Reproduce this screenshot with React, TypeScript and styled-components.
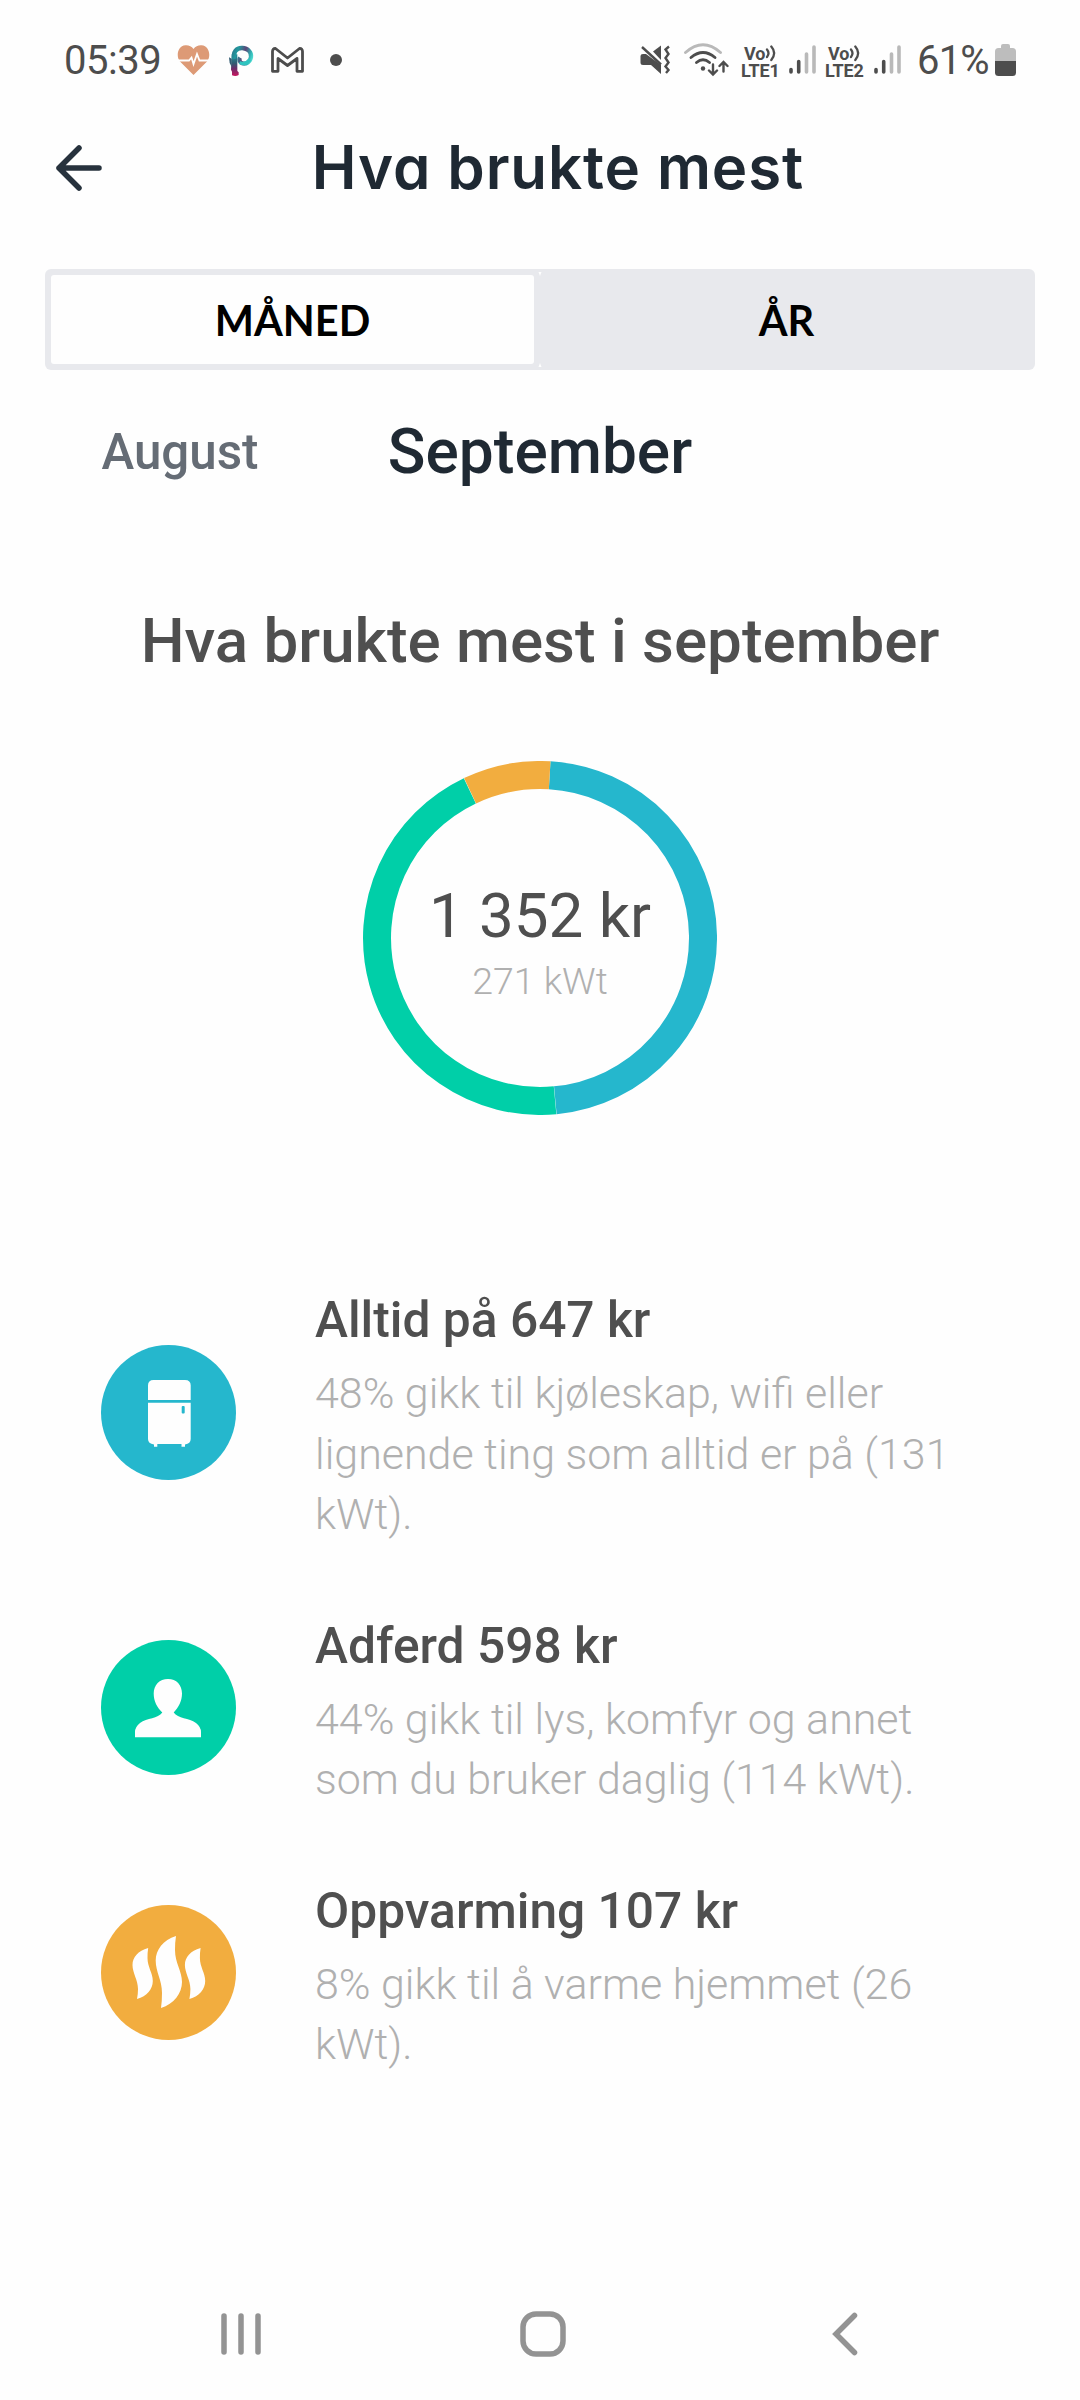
import React from "react";
import styled, { createGlobalStyle } from "styled-components";

const GlobalStyle = createGlobalStyle`
  * { box-sizing: border-box; }
  body { margin: 0; background: #fefefe; }
  svg { display: block; flex: none; }
`;

const ink = "#4d4d4d";
const faded = "#b9b9b9";

const Screen = styled.div`
  width: 1080px;
  height: 2400px;
  display: flex;
  flex-direction: column;
  background: #fefefe;
  font-family: Roboto, "Noto Sans", sans-serif;
  overflow: hidden;
`;

const StatusBar = styled.div`
  height: 120px;
  display: flex;
  align-items: center;
  justify-content: space-between;
  padding: 0 64px;
  color: ${ink};
  font-size: 40px;
  line-height: 48px;
`;

const StatusGroup = styled.div`
  display: flex;
  align-items: center;
`;

const Gap = styled.span<{ $w: number }>`
  width: ${(p) => p.$w}px;
  flex: none;
`;

const Clock = styled.span`
  width: 113px;
  padding-top: 1px;
  white-space: nowrap;
  letter-spacing: -0.5px;
`;

const Percent = styled.span`
  width: 76px;
  padding-top: 1px;
  white-space: nowrap;
  letter-spacing: -0.8px;
`;

const Volte = styled.div`
  width: 41px;
  display: flex;
  flex-direction: column;
  font-size: 18px;
  line-height: 17px;
  font-weight: 700;
  letter-spacing: -0.2px;
  padding-top: 4px;
  white-space: nowrap;
`;

const VolteTop = styled.div`
  display: flex;
  padding-left: 3px;
`;

const Header = styled.header`
  height: 149px;
  padding: 0 0 53px 55px;
  display: grid;
  grid-template-columns: 48px 1fr 103px;
  align-items: center;
`;

const Title = styled.h1`
  margin: 0 0 2px 36px;
  font-family: Inter, sans-serif;
  font-size: 60px;
  line-height: 72px;
  font-weight: 600;
  font-feature-settings: "cv11", "ss03";
  letter-spacing: 0.9px;
  text-align: center;
  white-space: nowrap;
  color: #1f2933;
`;

const Tabs = styled.div`
  position: relative;
  height: 101px;
  margin: 0 45px;
  display: grid;
  grid-template-columns: 483px 493px;
  column-gap: 6px;
  padding: 6px 0 6px 6px;
  border-radius: 6px;
  background: #e8e9ed;
`;

const TabSeam = styled.svg`
  position: absolute;
  left: 493px;
  top: 3px;
`;

const Tab = styled.button<{ $active?: boolean }>`
  border: 0;
  padding: 0;
  border-radius: 3px;
  background: ${(p) => (p.$active ? "#fefefe" : "transparent")};
  color: #000;
  font: 700 41.5px/60px Lato, sans-serif;
`;

const Months = styled.div`
  height: 164px;
  display: grid;
  grid-template-columns: 360px 360px 360px;
  align-items: center;
  justify-items: center;
`;

const Month = styled.span<{ $current?: boolean }>`
  font-weight: 500;
  font-size: ${(p) => (p.$current ? 62.2 : 49.3)}px;
  line-height: 72px;
  color: ${(p) => (p.$current ? "#1f2933" : "#656c75")};
`;

const SectionTitle = styled.h2`
  margin: 71px 0 0;
  font-size: 61.9px;
  line-height: 72px;
  font-weight: 500;
  text-align: center;
  color: #4f4f4f;
`;

const Chart = styled.div`
  display: grid;
  place-items: center;
  margin: 84px auto 0;
  width: 354px;
  height: 354px;
  & > * { grid-area: 1 / 1; }
`;

const Total = styled.div`
  display: flex;
  flex-direction: column;
  align-items: center;
  padding-top: 6px;
`;

const Amount = styled.span`
  font-size: 61.9px;
  line-height: 80px;
  color: #4f4f4f;
`;

const Energy = styled.span`
  font-size: 37.5px;
  line-height: 50px;
  font-weight: 300;
  color: #b0b0b0;
`;

const List = styled.ul`
  list-style: none;
  margin: 165px 0 0;
  padding: 0 101px;
  display: flex;
  flex-direction: column;
  gap: 61px;
`;

const Item = styled.li`
  display: grid;
  grid-template-columns: 135px 660px;
  column-gap: 79px;
  align-items: center;
`;

const Badge = styled.div<{ $color: string }>`
  width: 135px;
  height: 135px;
  border-radius: 50%;
  background: ${(p) => p.$color};
`;

const ItemTitle = styled.h3`
  margin: 0 0 3px;
  font-size: 49.7px;
  line-height: 80px;
  font-weight: 500;
  color: #4f4f4f;
`;

const ItemText = styled.p`
  margin: 0;
  font-size: 42.95px;
  line-height: 60.5px;
  font-weight: 300;
  color: #b0b0b0;
`;

const NavBar = styled.nav`
  margin-top: auto;
  height: 132px;
  display: grid;
  grid-template-columns: 299px 312px 26px;
  padding-left: 221px;
  align-items: center;
`;

const BLUE = "#25b7cd";
const GREEN = "#00cfa8";
const ORANGE = "#f2ad3f";

const arc = (from: number, to: number) => {
  const r = 163;
  const pt = (d: number) => {
    const a = (d * Math.PI) / 180;
    return `${(177 + r * Math.sin(a)).toFixed(2)} ${(177 - r * Math.cos(a)).toFixed(2)}`;
  };
  return `M${pt(from)}A${r} ${r} 0 0 1 ${pt(to)}`;
};

const Donut = () => (
  <svg width="354" height="354" viewBox="0 0 354 354" fill="none" strokeWidth="28">
    <path d={arc(3.4, 174.6)} stroke={BLUE} />
    <path d={arc(174.7, 334.5)} stroke={GREEN} />
    <path d={arc(334.6, 363.4)} stroke={ORANGE} />
  </svg>
);

const Fridge = () => (
  <svg width="135" height="135" viewBox="0 0 135 135" fill="#fefefe">
    <path d="M47 55V40.500Q47 35 52.500 35H84Q89.700 35 89.700 40.500V55Z" />
    <path d="M47 57.700H89.700V94Q89.700 98.500 84 99.500V101.800H80.500V99H56.300V101.800H53V99.500Q47 98.500 47 94Z" />
    <rect x="80.700" y="61" width="3" height="7.500" rx="1" fill={BLUE} />
  </svg>
);

const Person = () => (
  <svg width="135" height="135" viewBox="0 0 135 135" fill="#fefefe">
    <path d="M67 39C75.500 39 81 45 81 53.500C81 61 77.500 67.500 72.700 72.500C77 79 88 77.500 95 83Q100 87 100 92V97.300H34V92Q34 87 39 83C46 77.500 57 79 61.300 72.500C56 67.500 52.700 61 52.700 53.500C52.700 45 58.500 39 67 39Z" />
  </svg>
);

const sideFlame =
  "M47.200 43C37 46 31.500 52 31.500 60C31.500 68 37 75 37 84Q37 89 36 94C46 91.500 51.800 84 51.800 76C51.800 68 46.500 62 46.500 53Q46.500 47 47.200 43Z";

const Heat = () => (
  <svg width="135" height="135" viewBox="0 0 135 135" fill="#fefefe">
    <path d="M75 31C62 35 54.700 45 54.700 55.500C54.700 67 61 75 61 88Q61 96 60 103C73 99 81 88 81 77C81 66 74 58 74 45Q74 37 75 31Z" />
    <path d={sideFlame} />
    <path d={sideFlame} transform="translate(52.400 0)" />
  </svg>
);

const HeartRate = () => (
  <svg width="33" height="30" viewBox="0 0 33 30">
    <path d="M16.500 30L3 16.500C-1 12 0 1 8.500 0.300Q13.500 0 16.500 4Q19.500 0 24.500 0.300C33 1 34 12 30 16.500Z" fill="#dd9a76" />
    <path d="M0 15.500H12L14.500 12.500L16.500 19L20 9L22.500 15.500H33" fill="none" stroke="#fefefe" strokeWidth="1.800" />
  </svg>
);

const PLogo = () => (
  <svg width="28" height="35" viewBox="0 0 84 105">
    <defs>
      <linearGradient id="bowl" gradientUnits="userSpaceOnUse" x1="10" y1="20" x2="78" y2="44">
        <stop offset="0" stopColor="#2f6d83" />
        <stop offset="0.300" stopColor="#219a9f" />
        <stop offset="0.600" stopColor="#5b4577" />
        <stop offset="0.850" stopColor="#2fb3b4" />
        <stop offset="1" stopColor="#51ded3" />
      </linearGradient>
      <linearGradient id="stem" gradientUnits="userSpaceOnUse" x1="0" y1="36" x2="0" y2="98">
        <stop offset="0" stopColor="#238f9b" />
        <stop offset="0.400" stopColor="#315b72" />
        <stop offset="0.650" stopColor="#6b2d6b" />
        <stop offset="1" stopColor="#c5175f" />
      </linearGradient>
    </defs>
    <path d="M14 34H31V84L35 88V96Q26 102 15 97V86L12 80Z" fill="url(#stem)" />
    <path d="M6 43L14 47V72L8 60Z" fill="#315b72" />
    <path d="M22 48C17 28 28 14 46 15C63 16 74 28 72 42C70 56 57 65 46 61C38 58 35 51 39 44" stroke="url(#bowl)" strokeWidth="13" fill="none" />
    <path d="M38 58Q54 68 68 50" stroke="#2fc4c0" strokeWidth="10" fill="none" />
  </svg>
);

const Mail = () => (
  <svg width="33" height="26" viewBox="0 0 33 26" fill="none" stroke={ink} strokeWidth="2.800" strokeLinejoin="round">
    <path d="M1.500 24.300V4.500Q1.500 1.300 4.500 1.500L16.500 11L28.500 1.500Q31.500 1.300 31.500 4.500V24.300H26V11.500L16.500 18.500L7 11.500V24.300Z" />
  </svg>
);

const Mute = () => (
  <svg width="31" height="30" viewBox="0 0 31 30" fill={ink}>
    <path d="M13 6.500L21 0.500V15Z" />
    <path d="M0.500 11Q0.500 9 3 9H6L21 20V29L11 20H3Q0.500 20 0.500 17.500Z" />
    <path d="M2 2L21 19.500" stroke={ink} strokeWidth="2.400" />
    <path d="M29 1.500L25.500 4.500L28.500 9L25.500 13L28.500 17.500L25.500 21.500L28.500 25L26 28" fill="none" stroke={ink} strokeWidth="2.400" />
  </svg>
);

const Wifi = () => (
  <svg width="45" height="34" viewBox="0 0 45 34" fill="none" strokeWidth="2.900" strokeLinecap="round">
    <path d="M1.500 9.500Q19 -6 36.500 9.500" stroke={faded} />
    <path d="M7 14.500Q19 4.500 31 14.500" stroke={ink} />
    <path d="M12.500 19.500Q19 14 25.500 19.500" stroke={ink} />
    <circle cx="19" cy="25.500" r="2.200" fill={ink} />
    <path d="M29 21.500V31M25 27.500L29 31.500L33 27.500M39.500 28.500V19.500M35.500 23L39.500 19L43.500 23" stroke={ink} strokeWidth="2.400" />
  </svg>
);

const Waves = () => (
  <svg width="11" height="17" viewBox="0 0 11 17" fill="none" stroke={ink} strokeWidth="2.300" strokeLinecap="round">
    <path d="M2 4.500Q5 8.300 2 12M6.300 1.500Q12 8 6.300 15" />
  </svg>
);

const Signal = () => (
  <svg width="27" height="30" viewBox="0 0 27 30" strokeWidth="3.600" strokeLinecap="round">
    <path d="M2 24.500V27M9.700 16.500V27" stroke={ink} />
    <path d="M17.500 9V27M25 2V27" stroke={faded} />
  </svg>
);

const Battery = () => (
  <svg width="21" height="32" viewBox="0 0 21 32">
    <path d="M6 4V2Q6 0 8 0H13Q15 0 15 2V4H17.500Q21 4 21 7.500V17H0V7.500Q0 4 3.500 4Z" fill="#bdbdbd" />
    <path d="M0 17H21V28.500Q21 32 17.500 32H3.500Q0 32 0 28.500Z" fill={ink} />
  </svg>
);

const VolteBadge = ({ line }: { line: string }) => (
  <Volte>
    <VolteTop>
      Vo
      <Waves />
    </VolteTop>
    <span>{line}</span>
  </Volte>
);

const entries = [
  { color: BLUE, icon: <Fridge />, title: "Alltid på 647 kr", text: "48% gikk til kjøleskap, wifi eller lignende ting som alltid er på (131 kWt)." },
  { color: GREEN, icon: <Person />, title: "Adferd 598 kr", text: "44% gikk til lys, komfyr og annet som du bruker daglig (114 kWt)." },
  { color: ORANGE, icon: <Heat />, title: "Oppvarming 107 kr", text: "8% gikk til å varme hjemmet (26 kWt)." },
];

export default function App() {
  return (
    <Screen>
      <GlobalStyle />
      <StatusBar>
        <StatusGroup>
          <Clock>05:39</Clock>
          <HeartRate />
          <Gap $w={17} />
          <PLogo />
          <Gap $w={16} />
          <Mail />
          <Gap $w={26} />
          <svg width="12" height="12" viewBox="0 0 12 12">
            <circle cx="6" cy="6" r="6" fill={ink} />
          </svg>
        </StatusGroup>
        <StatusGroup>
          <Mute />
          <Gap $w={13} />
          <Wifi />
          <Gap $w={12} />
          <VolteBadge line="LTE1" />
          <Gap $w={7} />
          <Signal />
          <Gap $w={9} />
          <VolteBadge line="LTE2" />
          <Gap $w={8} />
          <Signal />
          <Gap $w={16} />
          <Percent>61%</Percent>
          <Gap $w={2} />
          <Battery />
        </StatusGroup>
      </StatusBar>

      <Header>
        <svg width="48" height="48" viewBox="0 0 48 48" fill="none" stroke="#27323d" strokeWidth="5.500" strokeLinecap="round" strokeLinejoin="round">
          <path d="M44 24H4M24 4L4 24L24 44" />
        </svg>
        <Title>Hva brukte mest</Title>
      </Header>

      <Tabs>
        <Tab $active>MÅNED</Tab>
        <Tab>ÅR</Tab>
        <TabSeam width="4" height="95" viewBox="0 0 4 95" fill="#fefefe">
          <path d="M0.500 0H3.500L2 4ZM0.500 95H3.500L2 91Z" />
        </TabSeam>
      </Tabs>

      <Months>
        <Month>August</Month>
        <Month $current>September</Month>
      </Months>

      <SectionTitle>Hva brukte mest i september</SectionTitle>

      <Chart>
        <Donut />
        <Total>
          <Amount>1 352 kr</Amount>
          <Energy>271 kWt</Energy>
        </Total>
      </Chart>

      <List>
        {entries.map((e) => (
          <Item key={e.title}>
            <Badge $color={e.color}>{e.icon}</Badge>
            <div>
              <ItemTitle>{e.title}</ItemTitle>
              <ItemText>{e.text}</ItemText>
            </div>
          </Item>
        ))}
      </List>

      <NavBar>
        <svg width="40" height="46" viewBox="0 0 40 46" stroke="#939393" strokeWidth="5.500" strokeLinecap="round">
          <path d="M3 5V41M20 5V41M37 5V41" />
        </svg>
        <svg width="46" height="46" viewBox="0 0 46 46" fill="none" stroke="#939393" strokeWidth="5.500">
          <rect x="3" y="3" width="40" height="40" rx="13" />
        </svg>
        <svg width="26" height="46" viewBox="0 0 26 46" fill="none" stroke="#939393" strokeWidth="5.500" strokeLinecap="round">
          <path d="M22.500 4.500L4 23L22.500 41.500" />
        </svg>
      </NavBar>
    </Screen>
  );
}
